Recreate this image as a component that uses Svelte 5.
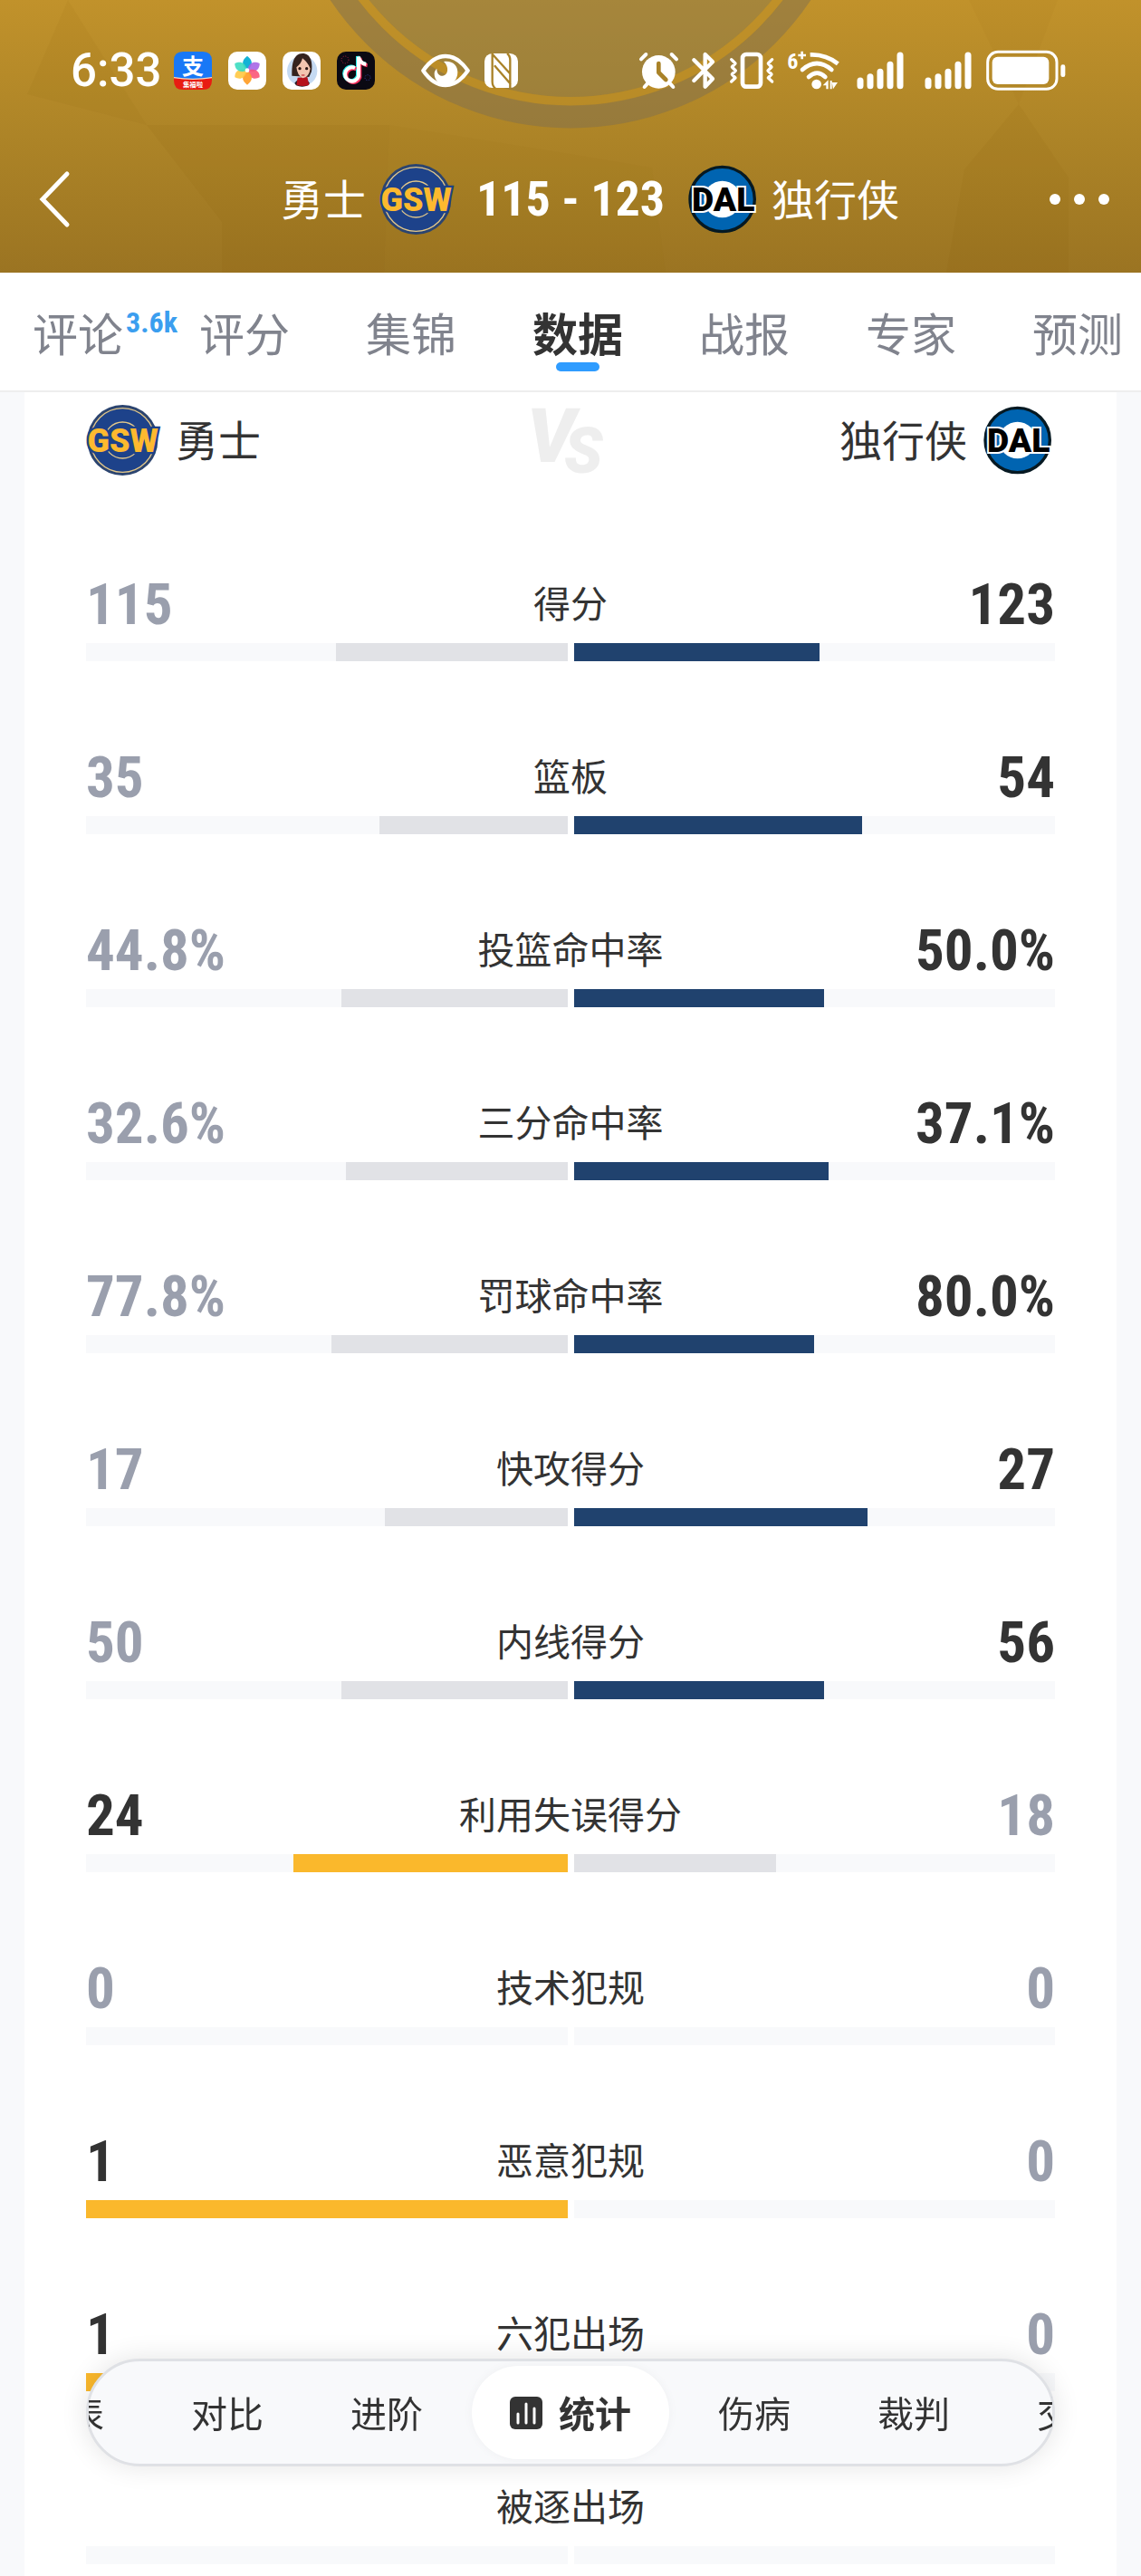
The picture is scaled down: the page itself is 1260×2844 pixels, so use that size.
<script>
	const stats = [
		{ name: '得分',         home: 115,  away: 123 },
		{ name: '篮板',         home: 35,   away: 54 },
		{ name: '投篮命中率',   home: 44.8, away: 50,   pct: true },
		{ name: '三分命中率',   home: 32.6, away: 37.1, pct: true },
		{ name: '罚球命中率',   home: 77.8, away: 80,   pct: true },
		{ name: '快攻得分',     home: 17,   away: 27 },
		{ name: '内线得分',     home: 50,   away: 56 },
		{ name: '利用失误得分', home: 24,   away: 18 },
		{ name: '技术犯规',     home: 0,    away: 0 },
		{ name: '恶意犯规',     home: 1,    away: 0 },
		{ name: '六犯出场',     home: 1,    away: 0 },
		{ name: '被逐出场' }
	];

	const tabs = ['评论', '评分', '集锦', '数据', '战报', '专家', '预测'];
	const sections = ['表', '对比', '进阶', '统计', '伤病', '裁判', '交'];

	let tab = $state('数据');
	let section = $state('统计');

	const show = (v, pct) => v === undefined ? '' : pct ? v.toFixed(1) + '%' : v;
	const share = (a = 0, b = 0) => a + b ? Math.floor((a / (a + b)) * 100) : 0;
</script>

{#snippet gsw()}
	<svg class="gsw" viewBox="69 27 240 240" aria-hidden="true">
		<circle cx="187" cy="147" r="117" fill="#2b4470" />
		<circle cx="187" cy="147" r="106" fill="#1d428a" stroke="#e3c88a" stroke-width="4" />
		<circle cx="187" cy="147" r="60" fill="none" stroke="#e3c88a" stroke-width="4" />
		<text x="188" y="185" text-anchor="middle" font-size="108" fill="#fdb92f" stroke="#1d428a"
			stroke-width="14" paint-order="stroke">GSW</text>
	</svg>
{/snippet}

{#snippet dal()}
	<svg class="dal" viewBox="1077 43 228 228" aria-hidden="true">
		<circle cx="1190" cy="157" r="107" fill="#0064b1" stroke="#061922" stroke-width="10" />
		<circle cx="1190" cy="157" r="61" fill="#fff" />
		<text x="1193" y="195" text-anchor="middle" font-size="112" fill="#000" stroke="#fff"
			stroke-width="12" paint-order="stroke">DAL</text>
	</svg>
{/snippet}

{#snippet signal()}
	<svg width="53" height="46" viewBox="770 30 159 138" aria-hidden="true">
		<g stroke="#fff" stroke-width="21" stroke-linecap="round">
			<path d="M782 132v17M815 119v30M848 103v46M881 79v70M914 48v101" />
		</g>
	</svg>
{/snippet}

<div class="page">
	<header>
		<svg class="backdrop" viewBox="0 0 1260 301" preserveAspectRatio="xMidYMin slice" aria-hidden="true">
			<circle cx="630" cy="-178" r="285" fill="#867750" opacity=".45" />
			<circle cx="630" cy="-178" r="290" fill="none" stroke="#c08f26" stroke-width="10" opacity=".5" />
			<circle cx="630" cy="-178" r="307" fill="none" stroke="#806f50" stroke-width="25" opacity=".5" />
			<g fill="#7c5800">
				<path d="M75 0 162 138 30 104z" opacity=".05" />
				<path d="M162 138h268l-6 163H245V245z" opacity=".07" />
				<path d="M1125 115l-60 72-20 114h135v-105z" opacity=".07" />
				<path d="M630 170l90 15 15 116H424l6-163z" opacity=".03" />
				<path d="M1070 0l55 115 43-115z" opacity=".04" />
			</g>
		</svg>

		<div class="status">
			<span class="time">6:33</span>
			<div class="apps">
				<svg width="42" height="42" viewBox="0 0 126 126" aria-hidden="true">
					<path fill="#1878f6" d="M30 0h66q30 0 30 30v62H0V30Q0 0 30 0z" />
					<path fill="#e81c12" d="M0 86q63 10 126 0v10q0 30-30 30H30Q0 126 0 96z" />
					<path fill="none" stroke="#ffd9b8" stroke-width="4" d="M0 86q63 10 126 0" />
					<text x="63" y="75" font-size="72" fill="#fff">支</text>
					<text x="63" y="117" font-size="22" fill="#fff">集福啦</text>
				</svg>
				<svg width="42" height="42" viewBox="0 0 126 126" aria-hidden="true">
					<rect width="126" height="126" rx="30" fill="#fff" />
					<path d="M63 62C38 42 50 24 63 15 76 24 88 42 63 62z" fill="#13b2d6" />
					<path d="M64 62C68 32 90 32 104 39 105 54 94 74 64 62z" fill="#a766e6" opacity=".9" />
					<path d="M64 63C94 52 105 70 104 85 90 93 70 92 64 63z" fill="#fb5577" opacity=".9" />
					<path d="M63 63C88 84 76 100 63 110 50 100 38 84 63 63z" fill="#ffa02c" opacity=".95" />
					<path d="M62 63C56 92 36 93 22 85 21 70 32 52 62 63z" fill="#ffc842" opacity=".9" />
					<path d="M62 62C32 74 21 54 22 39 36 32 58 32 62 62z" fill="#3cdcc0" opacity=".9" />
					<circle cx="63" cy="62" r="7" fill="#fff" />
				</svg>
				<svg width="42" height="42" viewBox="0 0 126 126" aria-hidden="true">
					<rect width="126" height="126" rx="30" fill="#fff" />
					<circle cx="65" cy="64" r="50" fill="#c5daf2" />
					<path d="M31 80C30 40 36 7 66 6c28 0 34 30 30 60L88 84z" fill="#34231f" />
					<path d="M40 104q24-30 50 0l-5 8q-20 8-40 0z" fill="#231b22" />
					<path d="M50 86l32-2 6 26q-20 8-42 0z" fill="#b5121b" />
					<path d="M46 52Q62 40 66 22q18 14 26 34-4 28-25 32-18-8-21-36z" fill="#f3c5b0" />
					<circle cx="57" cy="56" r="5" fill="#2b1714" />
					<circle cx="80" cy="56" r="5" fill="#2b1714" />
					<path d="M63 77q5 3 10 0" stroke="#c9464c" stroke-width="4" fill="none" />
				</svg>
				<svg width="42" height="42" viewBox="0 0 126 126" aria-hidden="true">
					<rect width="126" height="126" rx="30" fill="#0b0913" />
					<g fill="none" stroke-width="12">
						<path d="M60 54a23 23 0 1 0 12 28V17q4 22 25 25" stroke="#25ecea" transform="translate(-3 -2)" />
						<path d="M60 54a23 23 0 1 0 12 28V17q4 22 25 25" stroke="#fd3260" transform="translate(4 4)" />
						<path d="M60 54a23 23 0 1 0 12 28V17q4 22 25 25" stroke="#fff" />
					</g>
					<g fill="none" stroke-dasharray="3 5" stroke-width="3">
						<circle cx="27" cy="27" r="12" stroke="#b72343" />
						<circle cx="102" cy="86" r="9" stroke="#3b47b0" />
					</g>
				</svg>
			</div>
			<div class="modes">
				<svg width="54" height="46" viewBox="855 30 162 138" aria-hidden="true">
					<path d="M862 99Q895 51 936 51t74 48q-33 48-74 48t-74-48z" fill="none" stroke="#fff" stroke-width="13" stroke-linejoin="round" />
					<path d="M930 69c30-4 46 14 46 35 0 24-16 42-38 42-23 0-40-16-39-39 1-6 4-12 8-15 0 16 8 25 20 24 18-2 22-30 3-47z" fill="#fff" />
				</svg>
				<svg width="37" height="46" viewBox="1065 30 111 138" aria-hidden="true">
					<rect x="1065" y="42" width="111" height="114" rx="26" fill="#fff" />
					<path d="M1091 40v96q0 14 10 22M1150 158V64q0-14-10-22M1091 44l58 64M1098 82l54 62" fill="none" stroke="#a98228" stroke-width="7" />
				</svg>
			</div>
			<div class="system">
				<svg width="43" height="46" viewBox="48 30 129 138" aria-hidden="true">
					<g fill="none" stroke="#fff" stroke-width="12" stroke-linecap="round">
						<path d="M54 61l16-16M171 61l-16-16M74 143l-9 10M151 143l9 10" />
					</g>
					<circle cx="112" cy="103" r="55" fill="#fff" />
					<path d="M112 75v30l24 24" fill="none" stroke="#a98228" stroke-width="14" stroke-linecap="round" stroke-linejoin="round" />
				</svg>
				<svg width="26" height="46" viewBox="223 30 78 138" aria-hidden="true">
					<path d="M230 64l62 62-25 26v-44M230 132l62-62-25-25v50" fill="none" stroke="#fff" stroke-width="13" stroke-linecap="round" stroke-linejoin="round" />
				</svg>
				<svg width="50" height="46" viewBox="346 30 150 138" aria-hidden="true">
					<g fill="none" stroke="#fff" stroke-linejoin="round" stroke-linecap="round">
						<rect x="391" y="45" width="60" height="107" rx="12" stroke-width="14" />
						<path d="M354 62l13 13-11 12 12 12-12 12 11 12-13 12M489 62l-13 13 11 12-12 12 12 12-11 12 13 12" stroke-width="10" />
					</g>
				</svg>
				<svg width="58" height="46" viewBox="534 30 174 138" aria-hidden="true">
					<g fill="none" stroke="#fff" stroke-width="14" stroke-linecap="round">
						<path d="M608 46q52-2 92 30" stroke-linecap="butt" />
						<path d="M582 96q48-42 97 0M603 120q28-26 55 0" />
					</g>
					<circle cx="629" cy="144" r="16" fill="#fff" />
					<path d="M650 148l18-18v30h-7v-12zM674 132h6v28h-6zM680 138h19l-15 22z" fill="#fff" />
					<text x="550" y="92" font-size="72" fill="#fff">6</text>
					<path d="M568 48h26M581 35v26" stroke="#fff" stroke-width="8" />
				</svg>
				<div class="signals">
					{@render signal()}
					{@render signal()}
				</div>
				<svg width="88" height="46" viewBox="1196 30 264 138" aria-hidden="true">
					<rect x="1201" y="37" width="229" height="123" rx="34" fill="none" stroke="#fff" stroke-width="9" />
					<rect x="1216" y="53" width="188" height="91" rx="18" fill="#fff" />
					<rect x="1443" y="79" width="15" height="41" rx="7" fill="#fff" />
				</svg>
			</div>
		</div>

		<div class="scorebar">
			<button class="icon-btn back" aria-label="返回">
				<svg width="36" height="64" viewBox="0 0 36 64"><path d="M31 4 4 32l27 28" fill="none" stroke="#fff" stroke-width="5" stroke-linecap="round" /></svg>
			</button>
			<div class="team left"><span>勇士</span>{@render gsw()}</div>
			<strong class="score">115 - 123</strong>
			<div class="team">{@render dal()}<span>独行侠</span></div>
			<button class="icon-btn" aria-label="更多">
				<svg width="66" height="12" viewBox="0 0 66 12" fill="#fff"><circle cx="6" cy="6" r="6" /><circle cx="33" cy="6" r="6" /><circle cx="60" cy="6" r="6" /></svg>
			</button>
		</div>
	</header>

	<nav class="tabs">
		{#each tabs as name}
			<button class:current={tab === name} onclick={() => tab = name}>
				{name}{#if name === '评论'}<sup>3.6k</sup>{/if}
			</button>
		{/each}
	</nav>

	<main>
		<div class="teams">
			<div class="team">{@render gsw()}<span>勇士</span></div>
			<svg class="vs" width="84" height="76" viewBox="50 40 252 228" role="img" aria-label="VS">
				<text x="34" y="226" font-size="250">V<tspan x="158" y="262" font-size="210">S</tspan></text>
			</svg>
			<div class="team right"><span>独行侠</span>{@render dal()}</div>
		</div>

		{#each stats as { name, home, away, pct }}
			<section class="stat">
				<div class="values">
					<span class="num" class:win={home > away}>{show(home, pct)}</span>
					<h3>{name}</h3>
					<span class="num end" class:win={away > home}>{show(away, pct)}</span>
				</div>
				<div class="bars">
					<div class="track flip"><div class="fill" class:yellow={home > away} style:width="{share(home, away)}%"></div></div>
					<div class="track"><div class="fill" class:navy={away > home} style:width="{share(away, home)}%"></div></div>
				</div>
			</section>
		{/each}
	</main>

	<nav class="dock">
		<div class="scroller">
			{#each sections as name}
				<button class:on={section === name} onclick={() => section = name}>
					{#if name === '统计'}
						<svg width="36" height="36" viewBox="0 0 36 36" aria-hidden="true">
							<rect width="36" height="36" rx="6" fill="#333" />
							<path d="M9 19v10M18 8v21M27 13v16" stroke="#fff" stroke-width="3" stroke-linecap="round" />
						</svg>
					{/if}
					{name}
				</button>
			{/each}
		</div>
	</nav>
</div>

<style>
	:global(body) { margin: 0; background: #f8f9fb }

	.page {
		font-family: 'Noto Sans CJK SC', sans-serif;
		color: #333;
		--num: 'Roboto Condensed', 'Liberation Sans Narrow', 'Roboto', sans-serif;
	}
	button {
		font: inherit; color: inherit;
		background: none; border: 0; padding: 0;
		white-space: nowrap; cursor: pointer;
	}
	svg { display: block; flex: none; overflow: visible }

	/* header */
	header {
		position: relative;
		padding-bottom: 17px;
		color: #fff;
		background: linear-gradient(#c1922b, #ad8427 50%, #9b7422);
	}
	.backdrop { position: absolute; inset: 0; width: 100%; height: 100%; overflow: hidden }
	.status {
		position: relative;
		display: flex; align-items: center;
		height: 156px;
		padding: 0 83px 0 78px;
	}
	.time     { font: 500 51px/60px 'Roboto', sans-serif; width: 114px }
	.apps     { display: flex; gap: 18px }
	.apps text {
		font-family: 'Noto Sans CJK SC', sans-serif; font-weight: 700;
		text-anchor: middle;
	}
	.modes    { display: flex; gap: 16px; margin-left: 51px }
	.system   { display: flex; gap: 15px; margin-left: auto }
	.system text { font-family: var(--num); font-weight: 700; text-anchor: middle }
	.signals  { display: flex; gap: 22px; margin-left: 3px }

	.scorebar {
		position: relative;
		display: grid; grid-template-columns: 66px 1fr auto 1fr 66px;
		align-items: center;
		height: 128px;
		padding: 0 35px;
	}
	.icon-btn { height: 96px }
	.back     { padding-left: 8px }
	.score    { font: 700 54px/64px var(--num); padding: 0 26px }
	.team     { display: flex; align-items: center; font-size: 47px; line-height: 64px }
	.team span { padding-bottom: 4px }
	.scorebar .team      { gap: 16px }
	.scorebar .team.left { justify-content: flex-end }
	.gsw { width: 80px; height: 80px }
	.dal { width: 76px; height: 76px }
	.gsw text, .dal text { font-family: 'Roboto', sans-serif; font-weight: 900 }

	/* top tabs */
	.tabs {
		display: flex; justify-content: space-between;
		padding: 0 20px 0 36px;
		height: 130px;
		background: #fff;
		border-bottom: 2px solid #eee;
		overflow: hidden;
	}
	.tabs button {
		position: relative;
		font-size: 50px; line-height: 130px;
		color: #80838d;
	}
	.tabs sup {
		position: absolute; left: 103px; top: 35px;
		font: 700 32px/40px var(--num);
		color: #3b9eef;
	}
	.tabs .current { color: #333; font-weight: 700 }
	.tabs .current::after {
		content: ''; position: absolute;
		left: 26px; right: 26px; bottom: 21px;
		height: 10px; border-radius: 5px;
		background: #2f9cff;
	}

	/* comparison card */
	main {
		margin: 0 27px;
		padding: 0 68px 13px;
		background: #fff;
	}
	.teams {
		display: grid; grid-template-columns: 1fr auto 1fr;
		align-items: center;
		height: 106px; margin-bottom: 96px;
		padding: 0 3px 0 1px;
	}
	.teams .team  { gap: 18px }
	.teams .right { justify-content: flex-end }
	.vs      { fill: #eee }
	.vs text { font-family: 'Roboto', sans-serif; font-weight: 900; font-style: italic }
	.vs tspan { stroke: #fff; stroke-width: 14px; paint-order: stroke }

	.stat + .stat { margin-top: 96px }
	.values {
		display: grid; grid-template-columns: 1fr auto 1fr;
		align-items: start;
		height: 64px; margin-bottom: 11px;
	}
	h3   { margin: 0; font-size: 41px; font-weight: 400; line-height: 58px }
	.num { font: 700 63px/66px var(--num); color: #9a9fad }
	.end { text-align: right }
	.win { color: #333 }

	.bars  { display: grid; grid-template-columns: 1fr 1fr; gap: 7px }
	.track { display: flex; height: 20px; background: #f8f9fb }
	.flip  { justify-content: flex-end }
	.fill  { background: #e1e2e6 }
	.yellow { background: #fab82c }
	.navy   { background: #20426e }

	/* floating section switcher */
	.dock {
		position: fixed; left: 95px; right: 95px; bottom: 121px;
		height: 113px;
		border: 3px solid #dfe1e5; border-radius: 60px;
		background: #f8f9fb;
		box-shadow: 0 0 30px #0000001c;
	}
	.scroller {
		display: flex; justify-content: center; align-items: center;
		height: 100%;
		overflow: hidden;
	}
	.scroller button {
		flex: none;
		display: flex; align-items: center; gap: 18px;
		padding: 0 48px;
		font-size: 40px; line-height: 103px;
	}
	.scroller .on {
		margin: 0 6px; padding: 0 42px;
		border-radius: 52px;
		background: #fff; font-weight: 700;
		box-shadow: 0 0 12px #0000000a;
	}
</style>
